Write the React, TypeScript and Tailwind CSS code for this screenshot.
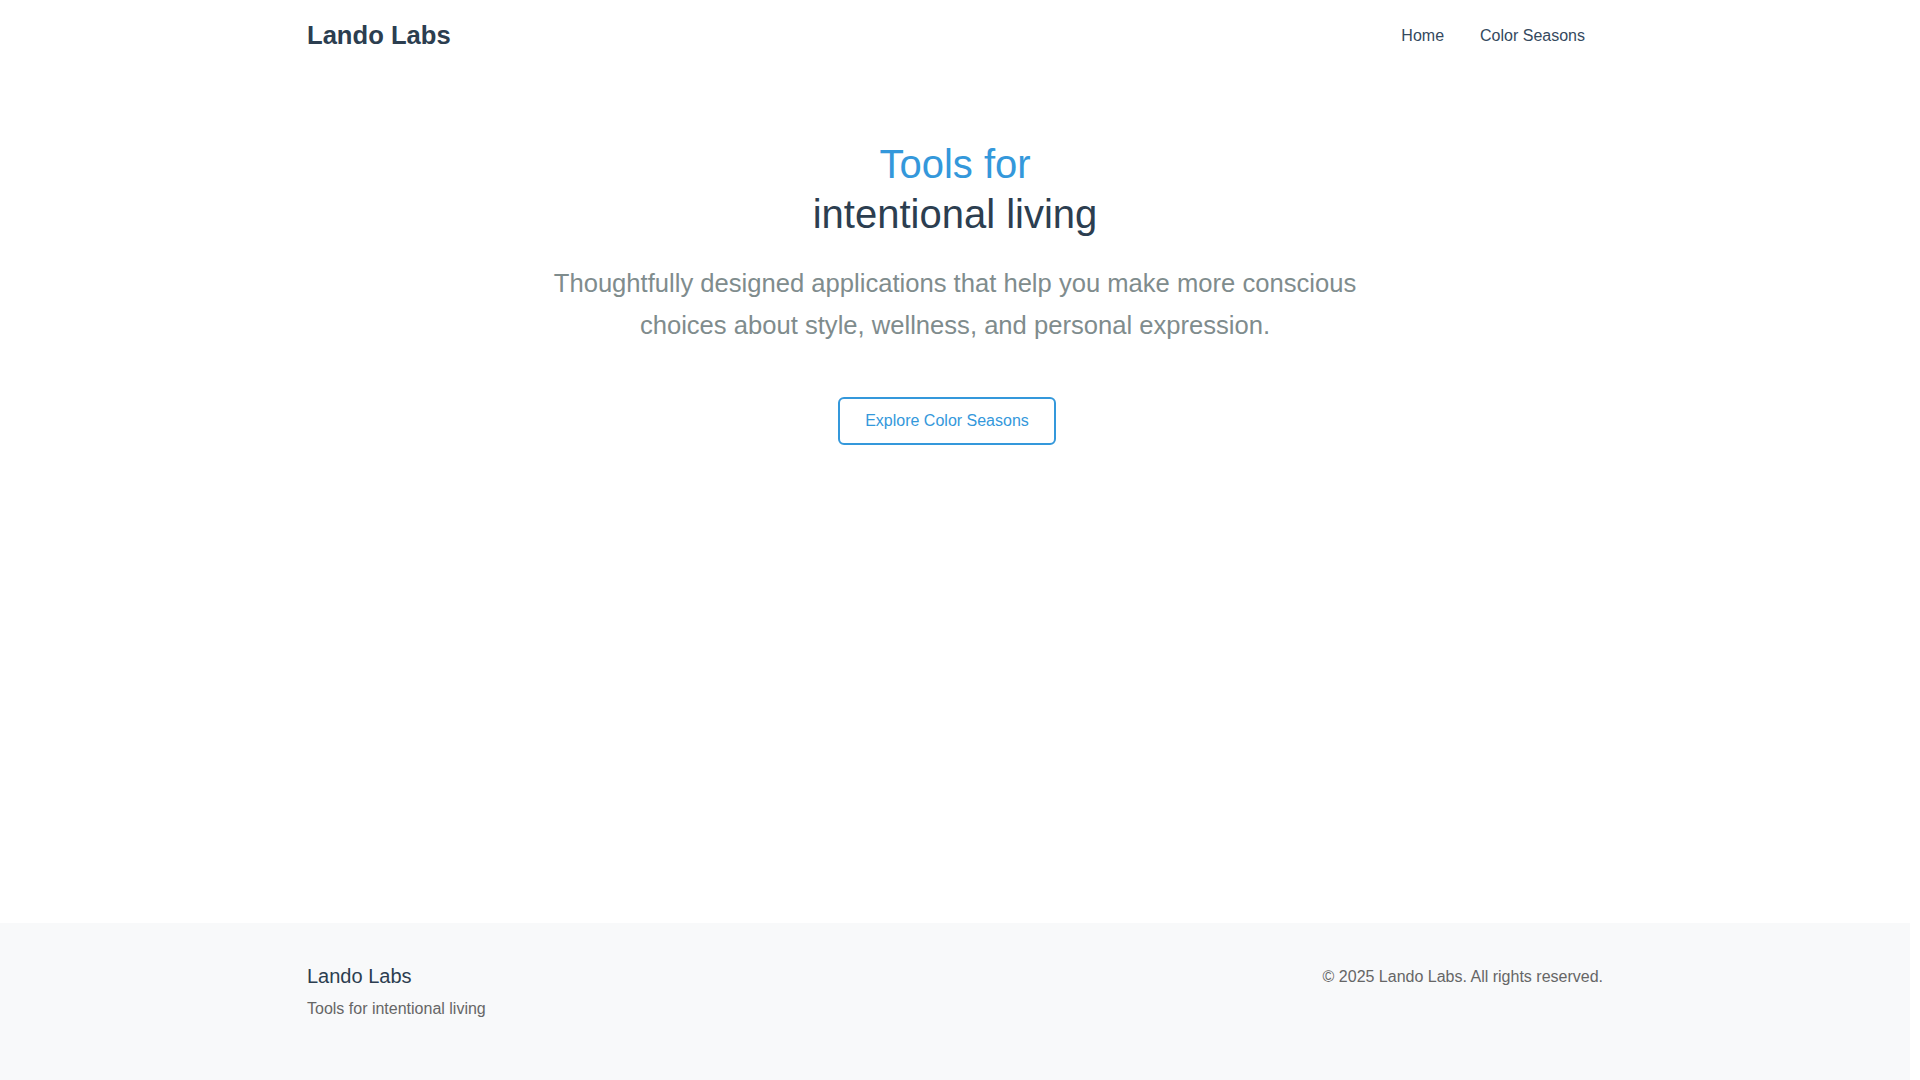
const font = { fontFamily: '"Liberation Sans", Arial, Helvetica, sans-serif' };

function Header() {
  return (
    <header className="w-full bg-white">
      <div className="mx-auto flex h-[70px] max-w-[1296px] items-center justify-between">
        <a href="#" className="text-[25.6px] font-bold leading-[38px] text-[#2c3e50]">
          Lando Labs
        </a>
        <nav className="flex items-center pt-[1px]">
          <a href="#" className="px-[18px] text-base leading-6 text-[#34495e]">
            Home
          </a>
          <a href="#" className="px-[18px] text-base leading-6 text-[#34495e]">
            Color Seasons
          </a>
        </nav>
      </div>
    </header>
  );
}

function Hero() {
  return (
    <main className="min-h-[853px] w-full bg-white pt-[69px]">
      <div className="mx-auto flex max-w-[1296px] flex-col items-center text-center">
        <h1 className="text-[40px] font-normal leading-[50px]">
          <span className="block text-[#3498db]">Tools for</span>
          <span className="block text-[#2c3e50]">intentional living</span>
        </h1>
        <p className="mt-6 max-w-[850px] text-[25.6px] leading-[41.6px] text-[#7f8c8d]">
          Thoughtfully designed applications that help you make more conscious
          choices about style, wellness, and personal expression.
        </p>
        <div className="mt-[51px] flex justify-center">
          <button className="mr-4 rounded-md border-2 border-[#3498db] bg-white px-[25px] py-3 text-base leading-5 text-[#3498db]">
            Explore Color Seasons
          </button>
        </div>
      </div>
    </main>
  );
}

function Footer() {
  return (
    <footer className="w-full bg-[#f8f9fa] pb-[62px] pt-[41px]">
      <div className="mx-auto flex max-w-[1296px] items-start justify-between">
        <div>
          <div className="text-xl leading-6 text-[#2c3e50]">Lando Labs</div>
          <div className="mt-[9px] text-base leading-6 text-[#666666]">
            Tools for intentional living
          </div>
        </div>
        <div className="pt-[1px] text-base leading-6 text-[#666666]">
          © 2025 Lando Labs. All rights reserved.
        </div>
      </div>
    </footer>
  );
}

export default function App() {
  return (
    <div className="w-full bg-white pr-[10px]" style={font}>
      <Header />
      <Hero />
      <Footer />
    </div>
  );
}
